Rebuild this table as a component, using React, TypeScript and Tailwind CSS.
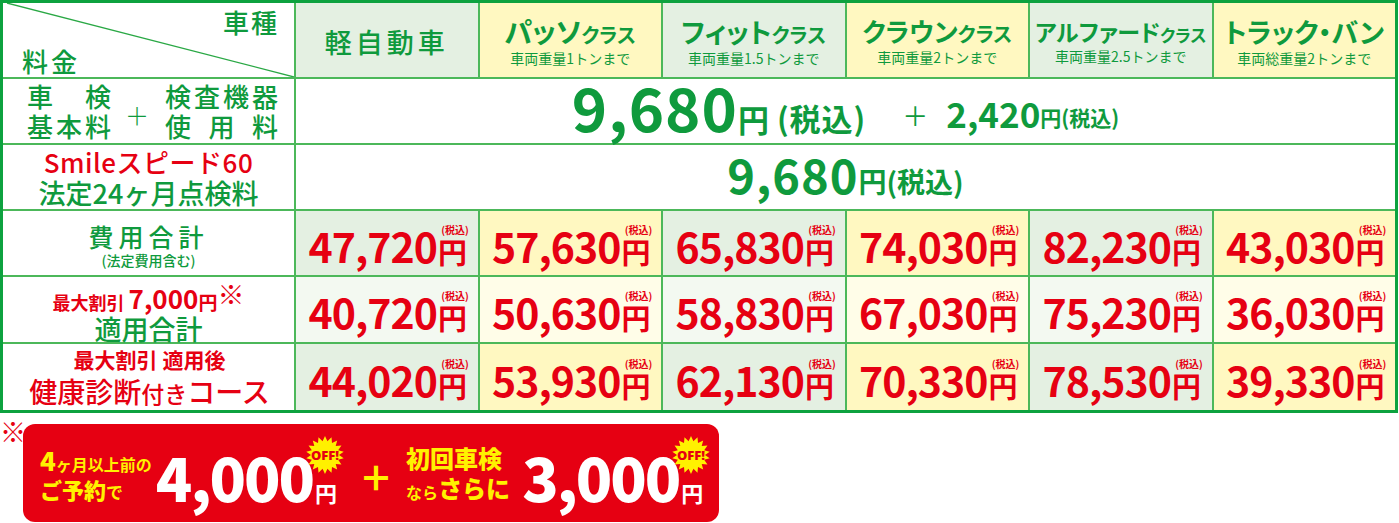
import React from "react";

function starPoints(cx: number, cy: number, r1: number, r2: number, n: number) {
  const pts: string[] = [];
  for (let i = 0; i < n * 2; i++) {
    const r = i % 2 === 0 ? r1 : r2;
    const a = (Math.PI * i) / n - Math.PI / 2;
    pts.push(`${(cx + r * Math.cos(a)).toFixed(2)},${(cy + r * Math.sin(a)).toFixed(2)}`);
  }
  return pts.join(" ");
}

function OffBadge() {
  return (
    <svg width="40" height="38" viewBox="0 0 40 38" className="absolute left-[-10px] top-[-45px]">
      <polygon points={starPoints(20, 19, 19, 14, 18)} fill="#fff100" />
      <text x="20" y="24" textAnchor="middle" fontSize="13" fontWeight="900" fill="#e60012" fontFamily="'Noto Sans', sans-serif">OFF!</text>
    </svg>
  );
}

function Price({ v }: { v: string }) {
  return (
    <div className="flex items-end whitespace-nowrap pl-[2px]">
      <span className="text-[41px] font-bold leading-none tracking-[-1px] text-[#e60012]">{v}</span>
      <span className="relative ml-[1px] text-[29px] font-bold leading-none text-[#e60012]">
        円
        <span className="absolute -top-[12px] right-[-2px] whitespace-nowrap text-[10px] font-bold leading-none">(税込)</span>
      </span>
    </div>
  );
}

function ClassHead({ name, cls, sub, bg, size, clsSize }: { name: string; cls?: string; sub: string; bg: string; size: string; clsSize?: string }) {
  return (
    <div className={`flex min-w-0 flex-col items-center justify-center ${bg} pt-[2px]`}>
      <div className="flex items-end whitespace-nowrap leading-none text-[#0f9a3d] [font-feature-settings:'palt']">
        <span className={`${size} font-bold`}>{name}</span>
        {cls && <span className={`${clsSize ?? "text-[20px]"} font-bold`}>{cls}</span>}
      </div>
      <div className="mt-[6px] whitespace-nowrap text-[14px] leading-none text-[#0f9a3d]">{sub}</div>
    </div>
  );
}

export default function App() {
  const p1 = ["47,720", "57,630", "65,830", "74,030", "82,230", "43,030"];
  const p2 = ["40,720", "50,630", "58,830", "67,030", "75,230", "36,030"];
  const p3 = ["44,020", "53,930", "62,130", "70,330", "78,530", "39,330"];
  return (
    <div className="h-[523px] w-[1399px] overflow-hidden whitespace-nowrap bg-white font-['Noto_Sans_CJK_JP','Noto_Sans',sans-serif]">
      <div className="grid w-[1398px] grid-cols-[291px_repeat(6,minmax(0,1fr))] grid-rows-[74px_64px_64px_64px_65px_66px] gap-[2px] border-[3px] border-[#0da23f] bg-[#4cb85a]">
        {/* header */}
        <div className="relative flex flex-col justify-between bg-white pb-[3px] pl-[19px] pr-[15px] pt-[6px] text-[#0f9a3d]">
          <svg className="absolute inset-0 h-full w-full" viewBox="0 0 291 74" preserveAspectRatio="none">
            <line x1="4" y1="0" x2="291" y2="74" stroke="#2aa845" strokeWidth="1.3" />
          </svg>
          <div className="relative self-end text-[26px] font-medium leading-none tracking-[2px]">車種</div>
          <div className="relative self-start text-[26px] font-medium leading-none tracking-[3px]">料金</div>
        </div>
        <div className="flex items-center justify-center bg-[#e4f0e2] pt-[3px]">
          <span className="text-[27px] font-medium leading-none tracking-[4px] text-[#0f9a3d]">軽自動車</span>
        </div>
        <ClassHead name="パッソ" cls="クラス" sub="車両重量1トンまで" bg="bg-[#fff8c1]" size="text-[28px]" />
        <ClassHead name="フィット" cls="クラス" sub="車両重量1.5トンまで" bg="bg-[#e4f0e2]" size="text-[27px]" />
        <ClassHead name="クラウン" cls="クラス" sub="車両重量2トンまで" bg="bg-[#fff8c1]" size="text-[26px]" />
        <ClassHead name="アルファード" cls="クラス" sub="車両重量2.5トンまで" bg="bg-[#e4f0e2]" size="text-[23px]" clsSize="text-[17px]" />
        <ClassHead name="トラック・バン" sub="車両総重量2トンまで" bg="bg-[#fff8c1]" size="text-[27px]" />

        {/* row 2 */}
        <div className="flex items-center bg-white pl-[24px] text-[26px] font-medium leading-[30px] text-[#0f9a3d]">
          <div className="flex w-[84px] flex-col">
            <div className="flex justify-between"><span>車</span><span>検</span></div>
            <div className="flex justify-between"><span>基</span><span>本</span><span>料</span></div>
          </div>
          <div className="ml-[14px] mr-[16px] mt-[8px] text-[24px] font-light">＋</div>
          <div className="flex w-[113px] flex-col">
            <div className="flex justify-between"><span>検</span><span>査</span><span>機</span><span>器</span></div>
            <div className="flex justify-between"><span>使</span><span>用</span><span>料</span></div>
          </div>
        </div>
        <div className="col-span-6 flex items-end justify-center bg-white pb-[7px] text-[#0f9a3d]">
          <span className="text-[60px] font-bold leading-none tracking-[1px]">9,680</span>
          <span className="mb-[2px] text-[31px] font-bold leading-none">円</span>
          <span className="mb-[3px] ml-[8px] text-[31px] font-bold leading-none tracking-[1px]">(税込)</span>
          <span className="mb-[8px] ml-[36px] text-[26px] leading-none">＋</span>
          <span className="mb-[6px] ml-[18px] text-[35px] font-bold leading-none">2,420</span>
          <span className="mb-[8px] text-[21px] font-bold leading-none">円(税込)</span>
        </div>

        {/* row 3 */}
        <div className="flex flex-col items-center justify-center bg-white pt-[2px] font-medium">
          <div className="text-[26px] leading-[30px] tracking-[0.5px] text-[#e60012]">Smileスピード60</div>
          <div className="text-[27px] leading-[32px] text-[#0f9a3d]">法定24ヶ月点検料</div>
        </div>
        <div className="col-span-6 flex items-end justify-center bg-white pb-[12px] text-[#0f9a3d]">
          <span className="text-[47px] font-bold leading-none tracking-[1px]">9,680</span>
          <span className="mb-[2px] text-[28px] font-bold leading-none">円(税込)</span>
        </div>

        {/* row 4 */}
        <div className="flex flex-col items-center justify-center bg-white pt-[4px] font-medium text-[#0f9a3d]">
          <div className="text-[25px] leading-[30px] tracking-[5px]">費用合計</div>
          <div className="text-[14px] leading-[18px]">(法定費用含む)</div>
        </div>
        {p1.map((v, i) => (
          <div key={v} className={i % 2 === 0 ? "bg-[#e4f0e2] flex items-center justify-center pt-[4px]" : "bg-[#fff8c1] flex items-center justify-center pt-[4px]"}>
            <Price v={v} />
          </div>
        ))}

        {/* row 5 */}
        <div className="flex flex-col items-center justify-center bg-white pt-[2px]">
          <div className="flex items-end leading-none text-[#e60012]">
            <span className="text-[18px] font-bold">最大割引</span>
            <span className="ml-[4px] text-[26px] font-bold">7,000</span>
            <span className="text-[19px] font-bold">円</span>
            <span className="mb-[4px] text-[27px] font-bold">※</span>
          </div>
          <div className="mt-[4px] text-[27px] font-medium leading-none text-[#0f9a3d]">適用合計</div>
        </div>
        {p2.map((v, i) => (
          <div key={v} className={i % 2 === 0 ? "bg-[#f3f9f1] flex items-center justify-center pt-[4px]" : "bg-[#fffde8] flex items-center justify-center pt-[4px]"}>
            <Price v={v} />
          </div>
        ))}

        {/* row 6 */}
        <div className="flex flex-col items-center justify-center bg-white pl-[2px] text-[#e60012]">
          <div className="text-[21px] font-bold leading-none">最大割引 適用後</div>
          <div className="mt-[7px] flex items-end text-[28px] font-medium leading-none">
            <span>健康診断</span>
            <span className="text-[23px]">付き</span>
            <span>コース</span>
          </div>
        </div>
        {p3.map((v, i) => (
          <div key={v} className={i % 2 === 0 ? "bg-[#e4f0e2] flex items-center justify-center pt-[4px]" : "bg-[#fff8c1] flex items-center justify-center pt-[4px]"}>
            <Price v={v} />
          </div>
        ))}
      </div>

      {/* bottom */}
      <div className="flex items-start pt-[11px]">
        <div className="mt-[-6px] w-[23px] text-[26px] font-bold leading-none text-[#e60012]">※</div>
        <div className="flex h-[98px] w-[696px] items-center rounded-[12px] bg-[#e60012] pl-[17px]">
          <div className="flex flex-col font-bold leading-none text-[#fff100]">
            <div className="flex items-end">
              <span className="text-[26px] font-black">4</span>
              <span className="mb-[1px] text-[16px]">ヶ月以上前の</span>
            </div>
            <div className="mt-[5px] flex items-end">
              <span className="text-[22px] font-black">ご予約</span>
              <span className="text-[17px]">で</span>
            </div>
          </div>
          <div className="ml-[4px] mt-[6px] flex items-end text-white">
            <span className="text-[60px] font-black leading-none tracking-[-2px]">4,000</span>
            <span className="relative mb-[3px] ml-[2px] text-[22px] font-bold leading-none">円<OffBadge /></span>
          </div>
          <div className="ml-[22px] mt-[8px] text-[34px] font-black leading-none text-[#fff100]">＋</div>
          <div className="ml-[13px] flex flex-col font-bold leading-none text-[#fff100]">
            <div className="text-[24px] font-black">初回車検</div>
            <div className="mt-[6px] flex items-end">
              <span className="text-[16px]">なら</span>
              <span className="text-[24px] font-black">さらに</span>
            </div>
          </div>
          <div className="ml-[12px] mt-[6px] flex items-end text-white">
            <span className="text-[60px] font-black leading-none tracking-[-2px]">3,000</span>
            <span className="relative mb-[3px] ml-[2px] text-[22px] font-bold leading-none">円<OffBadge /></span>
          </div>
        </div>
      </div>
    </div>
  );
}
